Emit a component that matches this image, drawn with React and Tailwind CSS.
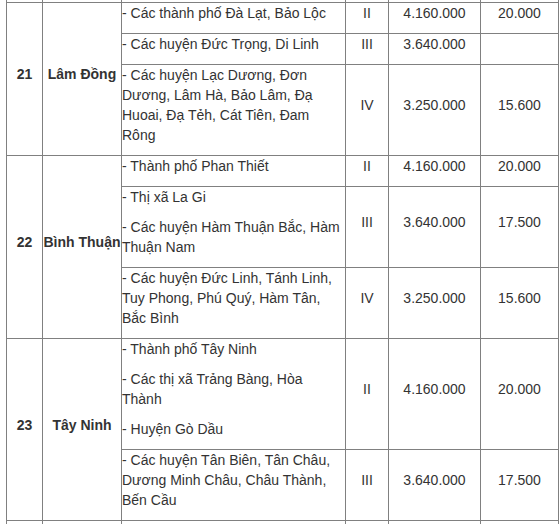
import React from "react";

const td = "border border-[#808080] p-0 align-middle";

function P({ children, className = "" }) {
  return <p className={"m-0 mb-[10px] leading-[20px] " + className}>{children}</p>;
}

function Sub({ lines, region, salary, hourly, first, num, name, span }) {
  return (
    <tr>
      {first && (
        <>
          <td rowSpan={span} className={td + " text-center font-bold"}>
            <P>{num}</P>
          </td>
          <td rowSpan={span} className={td + " text-center font-bold whitespace-nowrap"}>
            <P>{name}</P>
          </td>
        </>
      )}
      <td className={td + " text-left"}>
        {lines.map((l, i) => (
          <P key={i}>
            {l.map((s, j) => (
              <React.Fragment key={j}>
                {j > 0 && <br />}
                {s}
              </React.Fragment>
            ))}
          </P>
        ))}
      </td>
      <td className={td + " text-center"}>
        <P>{region}</P>
      </td>
      <td className={td + " text-center"}>
        <P>{salary}</P>
      </td>
      <td className={td + " text-center"}>
        <P>{hourly}</P>
      </td>
    </tr>
  );
}

function Blank({ h }) {
  return (
    <tr>
      <td className={td}><div className={h} /></td>
      <td className={td}></td>
      <td className={td}></td>
      <td className={td}></td>
      <td className={td}></td>
      <td className={td}></td>
    </tr>
  );
}

export default function App() {
  return (
    <div
      className="w-[559px] h-[524px] overflow-hidden bg-white text-[14px] text-[#333]"
      style={{ fontFamily: '"Liberation Sans", Arial, sans-serif' }}
    >
      <table className="ml-[6px] -mt-[20px] w-[552px] table-fixed border-collapse">
        <colgroup>
          <col className="w-[36px]" />
          <col className="w-[79px]" />
          <col className="w-[224px]" />
          <col className="w-[43px]" />
          <col className="w-[92px]" />
          <col className="w-[78px]" />
        </colgroup>
        <tbody>
          <Blank h="h-[21px]" />
          <Sub first num="21" name="Lâm Đồng" span={3}
            lines={[["- Các thành phố Đà Lạt, Bảo Lộc"]]}
            region="II" salary="4.160.000" hourly="20.000" />
          <Sub lines={[["- Các huyện Đức Trọng, Di Linh"]]}
            region="III" salary="3.640.000" hourly="" />
          <Sub
            lines={[["- Các huyện Lạc Dương, Đơn", "Dương, Lâm Hà, Bảo Lâm, Đạ", "Huoai, Đạ Tẻh, Cát Tiên, Đam", "Rông"]]}
            region="IV" salary="3.250.000" hourly="15.600" />
          <Sub first num="22" name="Bình Thuận" span={3}
            lines={[["- Thành phố Phan Thiết"]]}
            region="II" salary="4.160.000" hourly="20.000" />
          <Sub
            lines={[["- Thị xã La Gi"], ["- Các huyện Hàm Thuận Bắc, Hàm", "Thuận Nam"]]}
            region="III" salary="3.640.000" hourly="17.500" />
          <Sub
            lines={[["- Các huyện Đức Linh, Tánh Linh,", "Tuy Phong, Phú Quý, Hàm Tân,", "Bắc Bình"]]}
            region="IV" salary="3.250.000" hourly="15.600" />
          <Sub first num="23" name="Tây Ninh" span={2}
            lines={[["- Thành phố Tây Ninh"], ["- Các thị xã Trảng Bàng, Hòa", "Thành"], ["- Huyện Gò Dầu"]]}
            region="II" salary="4.160.000" hourly="20.000" />
          <Sub
            lines={[["- Các huyện Tân Biên, Tân Châu,", "Dương Minh Châu, Châu Thành,", "Bến Cầu"]]}
            region="III" salary="3.640.000" hourly="17.500" />
          <Blank h="h-[30px]" />
        </tbody>
      </table>
    </div>
  );
}
